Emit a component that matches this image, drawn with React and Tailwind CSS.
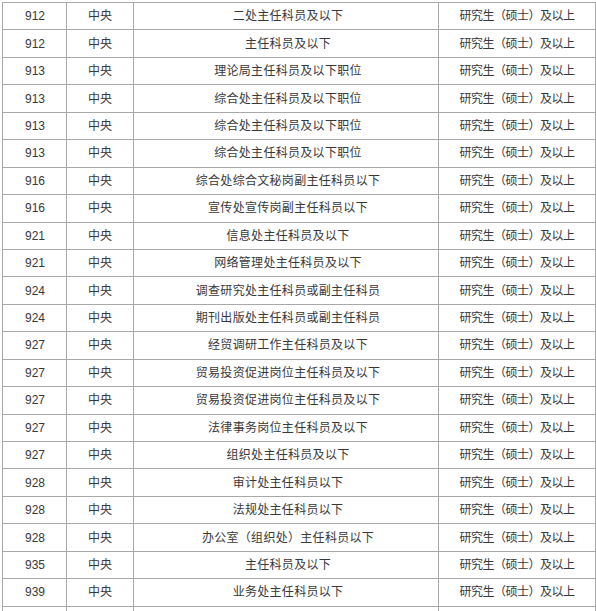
const rows = [
  ['912', '二处主任科员及以下'],
  ['912', '主任科员及以下'],
  ['913', '理论局主任科员及以下职位'],
  ['913', '综合处主任科员及以下职位'],
  ['913', '综合处主任科员及以下职位'],
  ['913', '综合处主任科员及以下职位'],
  ['916', '综合处综合文秘岗副主任科员以下'],
  ['916', '宣传处宣传岗副主任科员以下'],
  ['921', '信息处主任科员及以下'],
  ['921', '网络管理处主任科员及以下'],
  ['924', '调查研究处主任科员或副主任科员'],
  ['924', '期刊出版处主任科员或副主任科员'],
  ['927', '经贸调研工作主任科员及以下'],
  ['927', '贸易投资促进岗位主任科员及以下'],
  ['927', '贸易投资促进岗位主任科员及以下'],
  ['927', '法律事务岗位主任科员及以下'],
  ['927', '组织处主任科员及以下'],
  ['928', '审计处主任科员以下'],
  ['928', '法规处主任科员以下'],
  ['928', '办公室（组织处）主任科员以下'],
  ['935', '主任科员及以下'],
  ['939', '业务处主任科员以下'],
];

const cell = 'flex items-center justify-center border-r border-b border-[#a8a8a8]';

export default function App() {
  return (
    <div className="w-[596px] h-[611px] overflow-hidden bg-white pt-[2px] pl-[2px] text-[12px] text-[#383838] font-['Liberation_Sans','Noto_Sans_CJK_SC',sans-serif]">
      <div className="border-l border-t border-[#a8a8a8] w-[594px]">
        {[...rows, ['', '', '']].map(([num, post, edu], i) => (
          <div key={i} className="grid grid-cols-[64px_67px_305px_157px] h-[27.45px]">
            <div className={`${cell} pl-[1px]`}>{num}</div>
            <div className={cell}>{num ? '中央' : ''}</div>
            <div className={`${cell} tracking-[0.3px] pl-[4px]`}>{post}</div>
            <div className={`${cell} tracking-[-0.5px]`}>{edu === '' ? '' : '研究生（硕士）及以上'}</div>
          </div>
        ))}
      </div>
    </div>
  );
}
